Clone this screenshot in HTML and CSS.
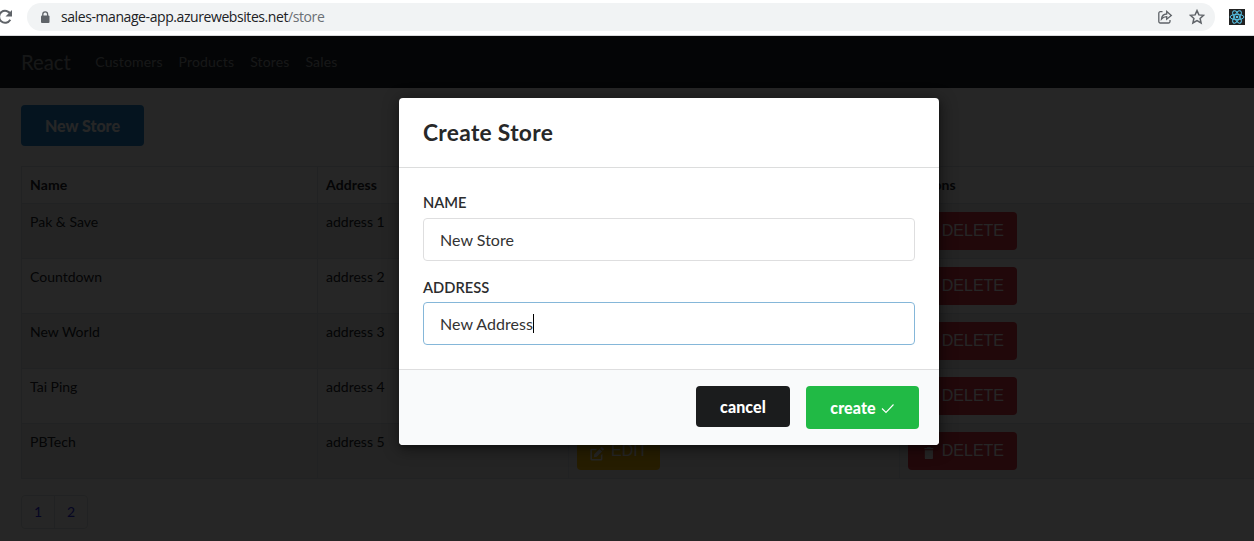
FILE: index.html
```
<!DOCTYPE html>
<html lang="en">
<head>
<meta charset="utf-8">
<title>Stores</title>
<link rel="stylesheet" href="styles.css">
</head>
<body>
<svg width="0" height="0" class="defs" aria-hidden="true">
  <symbol id="trash" viewBox="0 0 12 16"><path d="M1 4.500h10V14a1.500 1.500 0 0 1-1.500 1.500h-7A1.500 1.500 0 0 1 1 14zM.5 1.700h3L4 .8h4l.5.9h3v1.600H.5z"/></symbol>
  <symbol id="edit" viewBox="0 0 16 16"><path d="M12.500.8l2.700 2.700-1.600 1.600-2.700-2.700zM10.200 3.100l2.700 2.700-5.700 5.700-3.100.4.4-3.100zM1.700 2.800h6L6.200 4.400H2.100v9.500h9.500V9.800l1.600-1.600v6a1.400 1.400 0 0 1-1.400 1.300H1.700A1.400 1.400 0 0 1 .4 14.200V4.200a1.400 1.400 0 0 1 1.300-1.400z"/></symbol>
</svg>
<div class="browser">
  <svg class="reload" width="16" height="16" viewBox="0 0 16 16"><path d="M13.300 10.800a6 6 0 1 1 .2-5.600" fill="none" stroke="#5f6368" stroke-width="2"/><path d="M15 1v6.500H8.500z" fill="#5f6368"/></svg>
  <div class="omnibox">
    <svg class="lock" width="10" height="13" viewBox="0 0 10 13"><rect x="1" y="4.500" width="8.500" height="7.500" rx="1" fill="#5f6368"/><path d="M2.800 5V3.300a2.400 2.400 0 0 1 4.800 0V5" fill="none" stroke="#5f6368" stroke-width="1.300"/></svg>
    <span class="url">sales-manage-app.azurewebsites.net<span class="path">/store</span></span>
    <svg class="share" width="16" height="16" viewBox="0 0 16 16" fill="none" stroke="#5f6368" stroke-width="1.300"><path d="M5.500 2.700H3.300a1.500 1.500 0 0 0-1.500 1.500v8.300A1.500 1.500 0 0 0 3.300 14h8.200a1.500 1.500 0 0 0 1.500-1.500V11"/><path d="M4.500 10c.3-3.200 2-4.800 5.200-5V2.500L14.300 6.400 9.700 10.200V7.700C7.400 7.700 5.800 8.400 4.500 10z"/></svg>
    <svg class="star" width="16" height="16" viewBox="0 0 16 16"><path d="M8 1.600l1.900 4.300 4.700.4-3.500 3.100 1 4.600L8 11.600 3.900 14l1-4.600-3.500-3.100 4.700-.4z" fill="none" stroke="#5f6368" stroke-width="1.500"/></svg>
  </div>
  <svg class="react" width="16" height="16" viewBox="0 0 16 16"><path d="M0 0h16v16H0z" fill="#222"/><g fill="none" stroke="#58c4e8" stroke-width="1"><ellipse cx="8" cy="8" rx="6.900" ry="2.700"/><ellipse cx="8" cy="8" rx="6.900" ry="2.700" transform="rotate(60 8 8)"/><ellipse cx="8" cy="8" rx="6.900" ry="2.700" transform="rotate(120 8 8)"/></g><circle cx="8" cy="8" r="1.300" fill="#58c4e8"/></svg>
</div>
<div class="viewport">
  <nav class="navbar"><span class="brand">React</span><a>Customers</a><a>Products</a><a>Stores</a><a>Sales</a></nav>
  <main class="content">
    <button class="new-store">New Store</button>
    <table class="stores">
      <thead><tr><th class="c1">Name</th><th class="c2">Address</th><th class="c3">Actions</th><th>Actions</th></tr></thead>
      <tbody>
        <tr><td>Pak &amp; Save</td><td>address 1</td><td><button class="act edit"><svg width="15" height="15"><use href="#edit"/></svg>EDIT</button></td><td><button class="act delete"><svg width="10" height="14"><use href="#trash"/></svg>DELETE</button></td></tr>
        <tr><td>Countdown</td><td>address 2</td><td><button class="act edit"><svg width="15" height="15"><use href="#edit"/></svg>EDIT</button></td><td><button class="act delete"><svg width="10" height="14"><use href="#trash"/></svg>DELETE</button></td></tr>
        <tr><td>New World</td><td>address 3</td><td><button class="act edit"><svg width="15" height="15"><use href="#edit"/></svg>EDIT</button></td><td><button class="act delete"><svg width="10" height="14"><use href="#trash"/></svg>DELETE</button></td></tr>
        <tr><td>Tai Ping</td><td>address 4</td><td><button class="act edit"><svg width="15" height="15"><use href="#edit"/></svg>EDIT</button></td><td><button class="act delete"><svg width="10" height="14"><use href="#trash"/></svg>DELETE</button></td></tr>
        <tr><td>PBTech</td><td>address 5</td><td><button class="act edit"><svg width="15" height="15"><use href="#edit"/></svg>EDIT</button></td><td><button class="act delete"><svg width="10" height="14"><use href="#trash"/></svg>DELETE</button></td></tr>
      </tbody>
    </table>
    <div class="pages"><a>1</a><a>2</a></div>
  </main>
  <div class="dimmer">
    <section class="modal">
      <h2>Create Store</h2>
      <div class="form">
        <label>NAME</label>
        <div class="field">New Store</div>
        <label class="lower">ADDRESS</label>
        <div class="field focus">New Address<i class="caret"></i></div>
      </div>
      <footer><button class="cancel">cancel</button><button class="create">create<svg width="14" height="14" viewBox="0 0 14 14"><path d="M1 7.500l4 4L12.500 3.500" fill="none" stroke="#fff" stroke-width="1.100"/></svg></button></footer>
    </section>
  </div>
</div>
</body>
</html>
```
FILE: styles.css
```
* { box-sizing: border-box; }
body { margin: 0; height: 541px; overflow: hidden; display: flex; flex-direction: column; background: #fff; font: 14px/20px Lato, sans-serif; color: #212529; }
button { border: 0; margin: 0; }
.defs { position: absolute; }

.browser { height: 36px; flex: none; display: flex; align-items: flex-start; border-bottom: 1px solid #d9dadc; }
.reload { margin: 9px 0 0 -3px; flex: none; }
.omnibox { width: 1188px; height: 28px; margin: 3px 14px 0 14px; padding: 0 10px 0 13px; border-radius: 14px; background: #f1f3f4; display: flex; align-items: center; flex: none; }
.url { flex: 1; margin-left: 11px; font: 14px/28px "Open Sans", sans-serif; letter-spacing: -0.42px; color: #202124; }
.path { color: #6b6f74; }
.share { margin-right: 16px; }
.lock, .share, .star { flex: none; }
.react { margin-top: 9px; flex: none; }

.viewport { position: relative; height: 505px; }
.navbar { height: 52px; padding: 0 21px; display: flex; align-items: center; background: #1b2529; color: rgba(255,255,255,.55); }
.brand { font-size: 20.300px; margin-right: 24.500px; }
.navbar a { margin-right: 16px; letter-spacing: 0.14px; }

.content { padding: 17px 0 0 21px; }
.new-store { display: block; width: 123px; height: 41px; padding: 1px 0 0; border-radius: 4px; background: #2185d0; color: #fff; font: 900 16px/40px Lato, sans-serif; }
.stores { width: 1240px; margin-top: 20px; border-collapse: collapse; table-layout: fixed; }
.stores th, .stores td { border: 1px solid #dee2e6; padding: 8px 8px 7px; text-align: left; vertical-align: top; }
.stores th { height: 37px; font-weight: bold; letter-spacing: 0.1px; }
.stores td { height: 55px; }
.c1 { width: 296px; }
.c2 { width: 251px; }
.c3 { width: 331px; }
.stores tbody tr:nth-child(odd) { background: #f2f2f2; }
.act { display: flex; align-items: center; height: 38px; padding: 0 13px; border-radius: 4px; font: 16px/38px "Liberation Sans", sans-serif; color: #fff; }
.act svg { fill: currentColor; margin-right: 6px; position: relative; top: 2px; }
.edit { width: 83px; background: #ffc107; }
.edit svg { flex: none; }
.delete { width: 109px; padding-left: 16px; background: #dc3545; }
.delete svg { margin-right: 8px; }
.pages { margin-top: 16px; display: inline-flex; border: 1px solid #dee2e6; border-radius: 4px; }
.pages a { width: 32px; height: 32px; text-align: center; line-height: 32px; color: #2a2ae8; }
.pages a + a { width: 33px; border-left: 1px solid #dee2e6; }

.dimmer { position: absolute; inset: 0; padding: 62px 0 0 399px; background: rgba(0,0,0,.85); }
.modal { width: 540px; height: 347px; border-radius: 4px; background: #fff; overflow: hidden; display: flex; flex-direction: column; box-shadow: 1px 3px 3px rgba(0,0,0,.2), 1px 3px 15px 2px rgba(0,0,0,.4); }
.modal h2 { margin: 0; height: 70px; padding: 0 24px; border-bottom: 1px solid #dcdddd; font-size: 22.800px; line-height: 69px; font-weight: bold; letter-spacing: 0.28px; color: #272829; }
.form { flex: 1; padding: 24px 24px 0; }
.form label { display: block; height: 26px; line-height: 21px; font-size: 14.700px; font-weight: 600; color: #2c2d2e; }
.form .lower { line-height: 23px; }
.field { height: 43px; margin-bottom: 15px; padding: 0 16px; border: 1px solid #dededf; border-radius: 4px; display: flex; align-items: center; font-size: 16px; letter-spacing: 0.03px; color: #333; }
.focus { border-color: #85b7d9; }
.caret { width: 1px; height: 19px; background: #000; }
.modal footer { height: 76px; padding: 16px 20px; display: flex; gap: 16px; justify-content: flex-end; align-items: flex-start; background: #f9fafb; border-top: 1px solid #dededf; }
.modal button { border-radius: 4px; color: #fff; font: 900 16px/41px Lato, sans-serif; letter-spacing: 0.1px; display: flex; justify-content: center; align-items: center; padding: 0; }
.modal .cancel { width: 94px; height: 41px; background: #1b1c1d; }
.modal .create { width: 113px; height: 43px; background: #21ba45; }
.create svg { margin-left: 5px; }
```
